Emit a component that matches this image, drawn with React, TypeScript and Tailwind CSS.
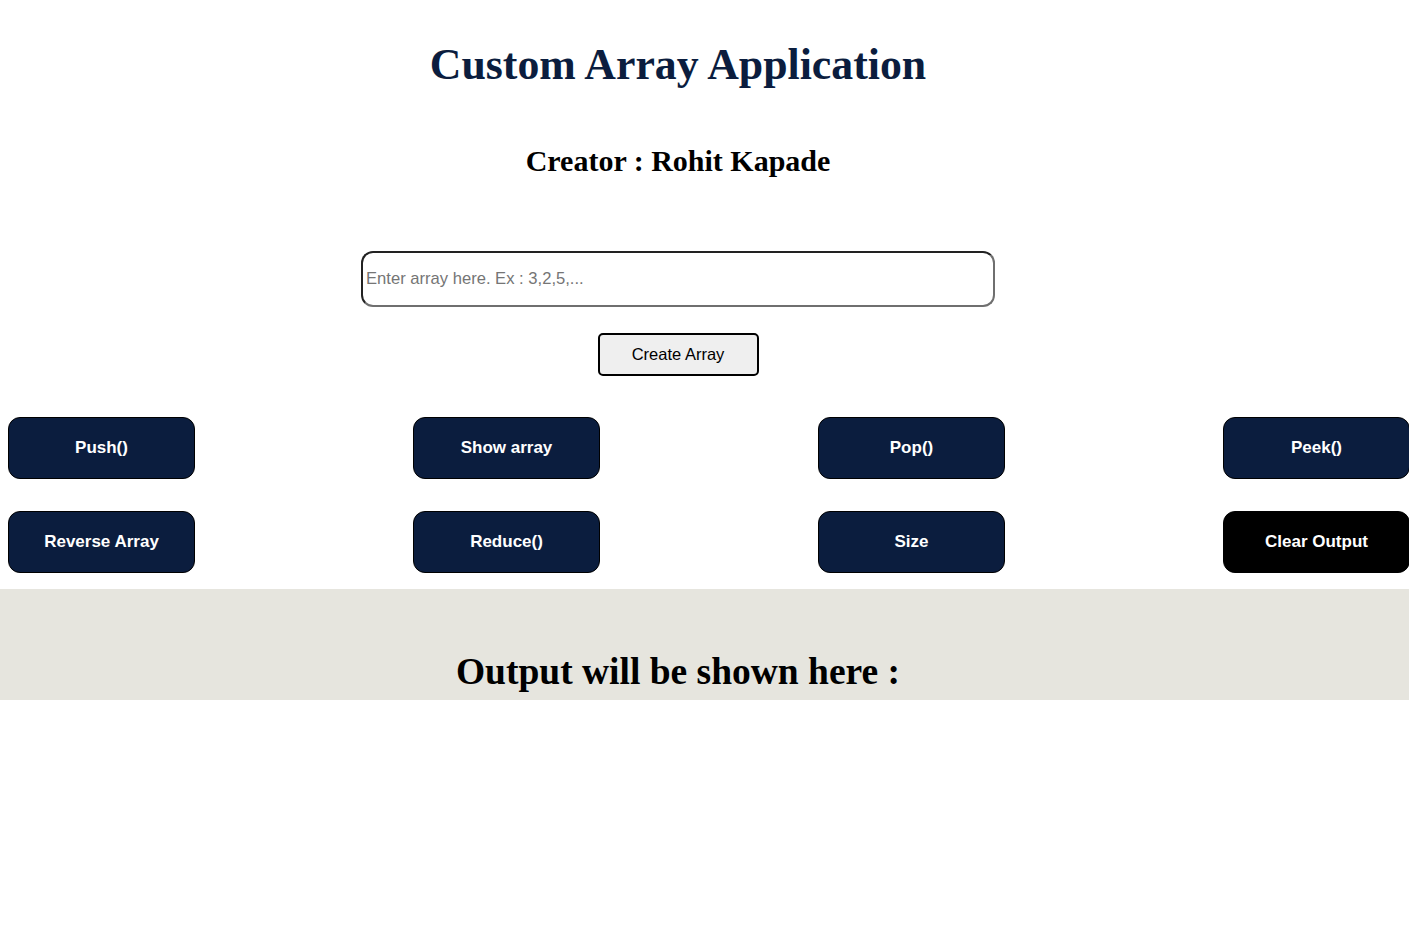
const ops = [
  { label: 'Push()', dark: false },
  { label: 'Show array', dark: false },
  { label: 'Pop()', dark: false },
  { label: 'Peek()', dark: false },
  { label: 'Reverse Array', dark: false },
  { label: 'Reduce()', dark: false },
  { label: 'Size', dark: false },
  { label: 'Clear Output', dark: true },
];

export default function App() {
  return (
    <div className="min-h-screen bg-white" style={{ fontFamily: '"Liberation Serif", serif' }}>
      <div className="w-[1356px]">
        <h1 className="pt-[34px] text-center text-[43.8px] font-bold leading-[60px] text-[#0b1d3e]">
          Custom Array Application
        </h1>
        <h2 className="mt-[47px] text-center text-[30px] font-bold leading-[40px] text-black">
          Creator : Rohit Kapade
        </h2>

        <div className="mt-[70px] flex flex-col items-center">
          <input
            type="text"
            placeholder="Enter array here. Ex : 3,2,5,..."
            className="h-[56px] w-[634px] rounded-[12px] border-2 border-t-[#222] border-l-[#222] border-r-[#6f6f6f] border-b-[#6f6f6f] px-[3px] text-[16.6px] text-black placeholder:text-[#757575] outline-none"
            style={{ fontFamily: '"Liberation Sans", Arial, sans-serif' }}
          />
          <button
            className="mt-[26px] h-[43px] w-[161px] rounded-[5px] border-2 border-black bg-[#efefef] text-[16.5px] text-black"
            style={{ fontFamily: '"Liberation Sans", Arial, sans-serif' }}
          >
            Create Array
          </button>
        </div>
      </div>

      <div
        className="mt-[41px] grid grid-cols-[repeat(4,187px)] gap-x-[218px] gap-y-[32px] pl-[8px]"
        style={{ fontFamily: '"Liberation Sans", Arial, sans-serif' }}
      >
        {ops.map((op) => (
          <button
            key={op.label}
            className={
              'h-[62px] w-[187px] rounded-[12px] border border-black text-[17px] font-bold text-white ' +
              (op.dark ? 'bg-black' : 'bg-[#0b1d3e]')
            }
          >
            {op.label}
          </button>
        ))}
      </div>

      <div className="mt-[16px] h-[111px] bg-[#e6e5de] pt-[63px]">
        <h2 className="w-[1356px] text-center text-[37.5px] font-bold leading-[40px] text-black">
          Output will be shown here :
        </h2>
      </div>
    </div>
  );
}
